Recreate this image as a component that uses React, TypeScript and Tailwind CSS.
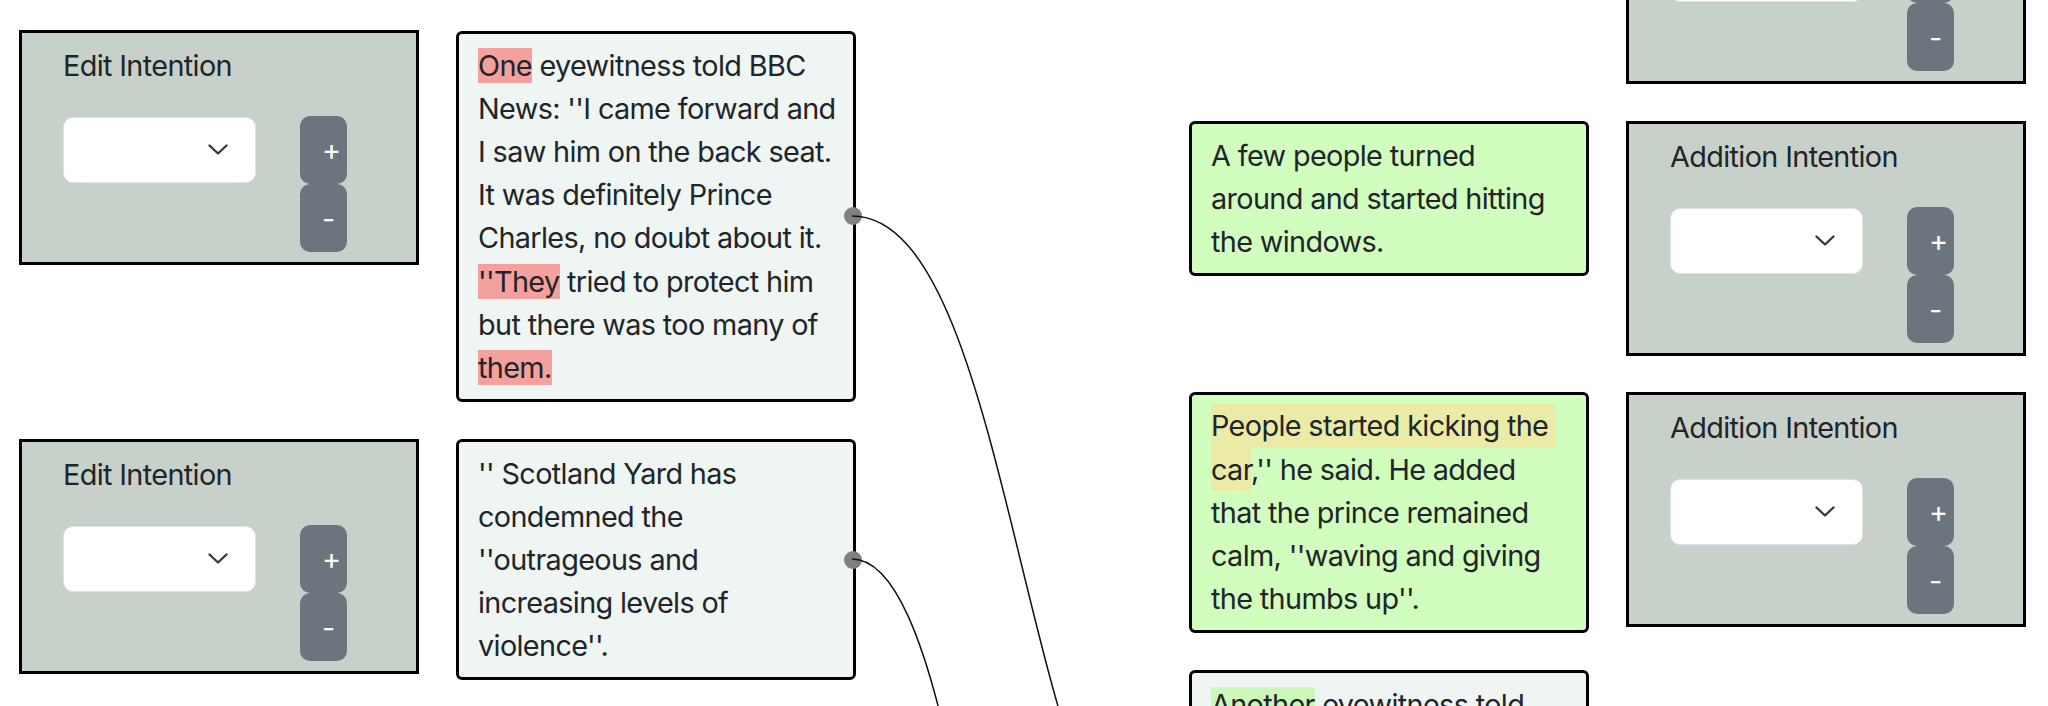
import React from "react";

type Pos = { className: string };

function Chevron() {
  return (
    <svg width="20" height="11" viewBox="0 0 20 11" fill="none">
      <path
        d="M1.5 1.5 L10 9.5 L18.5 1.5"
        stroke="#343a40"
        strokeWidth="2.4"
        strokeLinecap="round"
        strokeLinejoin="round"
      />
    </svg>
  );
}

function IntentionNode({ title, className }: Pos & { title: string }) {
  return (
    <div
      className={`absolute w-[400px] border-[3px] border-black bg-[#c8d1c9] pl-[41px] pt-[11px] pb-[10px] ${className}`}
    >
      <p className="leading-[43.2px]">{title}</p>
      <div className="mt-[28.5px] flex items-start gap-[44px]">
        <div className="mt-px flex h-[66px] w-[193px] items-center justify-end rounded-[10px] border border-[#dee2e6] bg-white pr-[27px]">
          <Chevron />
        </div>
        <div className="flex flex-col">
          <button className="h-[68.3px] w-[47px] rounded-[10px] bg-[#6c757d] pl-[22px] text-left text-white">
            +
          </button>
          <button className="h-[68.3px] w-[47px] rounded-[10px] bg-[#6c757d] pl-[22px] text-left text-white">
            -
          </button>
        </div>
      </div>
    </div>
  );
}

function TextNode({
  lines,
  bg,
  handle,
  className,
}: Pos & { lines: React.ReactNode[]; bg: string; handle?: boolean }) {
  return (
    <div
      className={`absolute w-[400px] rounded-[6px] border-[3px] border-black px-[19px] py-[9.6px] leading-[43.2px] ${bg} ${className}`}
    >
      {lines.map((line, i) => (
        <div key={i} className="whitespace-nowrap">
          {line}
        </div>
      ))}
      {handle && (
        <span className="absolute right-[-9px] top-1/2 h-[18px] w-[18px] -translate-y-1/2 rounded-full bg-[#808080]" />
      )}
    </div>
  );
}

const Red = ({ children }: { children: React.ReactNode }) => (
  <span className="bg-[#f3a09e]">{children}</span>
);

const Yellow = ({ children }: { children: React.ReactNode }) => (
  <span className="bg-[#ebeba6] py-[4.2px]">{children}</span>
);

const Green = ({ children }: { children: React.ReactNode }) => (
  <span className="bg-[#ccf9bb]">{children}</span>
);

export default function App() {
  return (
    <div className="relative h-[706px] w-[2048px] overflow-hidden bg-white font-['Inter','Noto_Sans',sans-serif] text-[28.8px] tracking-[-0.022em] text-[#212529]">
      {/* column 1 */}
      <IntentionNode title="Edit Intention" className="left-[19px] top-[30px]" />
      <IntentionNode title="Edit Intention" className="left-[19px] top-[439px]" />

      {/* column 2 */}
      <TextNode
        className="left-[456px] top-[31px]"
        bg="bg-[#eff5f2]"
        handle
        lines={[
          <>
            <Red>One</Red> eyewitness told BBC
          </>,
          "News: ''I came forward and",
          "I saw him on the back seat.",
          "It was definitely Prince",
          "Charles, no doubt about it.",
          <>
            <Red>''They</Red> tried to protect him
          </>,
          "but there was too many of",
          <Red>them.</Red>,
        ]}
      />
      <TextNode
        className="left-[456px] top-[439px]"
        bg="bg-[#eff5f2]"
        handle
        lines={[
          "'' Scotland Yard has",
          "condemned the",
          "''outrageous and",
          "increasing levels of",
          "violence''.",
        ]}
      />

      {/* column 3 */}
      <TextNode
        className="left-[1189px] top-[121px]"
        bg="bg-[#d1fdbe]"
        lines={["A few people turned", "around and started hitting", "the windows."]}
      />
      <TextNode
        className="left-[1189px] top-[392px]"
        bg="bg-[#d1fdbe]"
        lines={[
          <Yellow>People started kicking the{"\u00a0"}</Yellow>,
          <>
            <Yellow>car</Yellow>,'' he said. He added
          </>,
          "that the prince remained",
          "calm, ''waving and giving",
          "the thumbs up''.",
        ]}
      />
      <TextNode
        className="left-[1189px] top-[670px]"
        bg="bg-[#eff5f2]"
        lines={[
          <>
            <Green>Another</Green> eyewitness told
          </>,
          "the BBC that the crowd",
          "surrounded the car as it",
          "slowed down.",
        ]}
      />

      {/* column 4 */}
      <IntentionNode title="Addition Intention" className="left-[1626px] top-[-151px]" />
      <IntentionNode title="Addition Intention" className="left-[1626px] top-[121px]" />
      <IntentionNode title="Addition Intention" className="left-[1626px] top-[392px]" />

      {/* edges */}
      <svg className="pointer-events-none absolute inset-0 z-10 h-full w-full" viewBox="0 0 2048 706">
        <path d="M852 216 C1021 216 1021 909 1190 909" fill="none" stroke="#111" strokeWidth="1.5" />
        <path d="M852 559 C1021 559 1021 1889 1190 1889" fill="none" stroke="#111" strokeWidth="1.5" />
      </svg>
    </div>
  );
}
